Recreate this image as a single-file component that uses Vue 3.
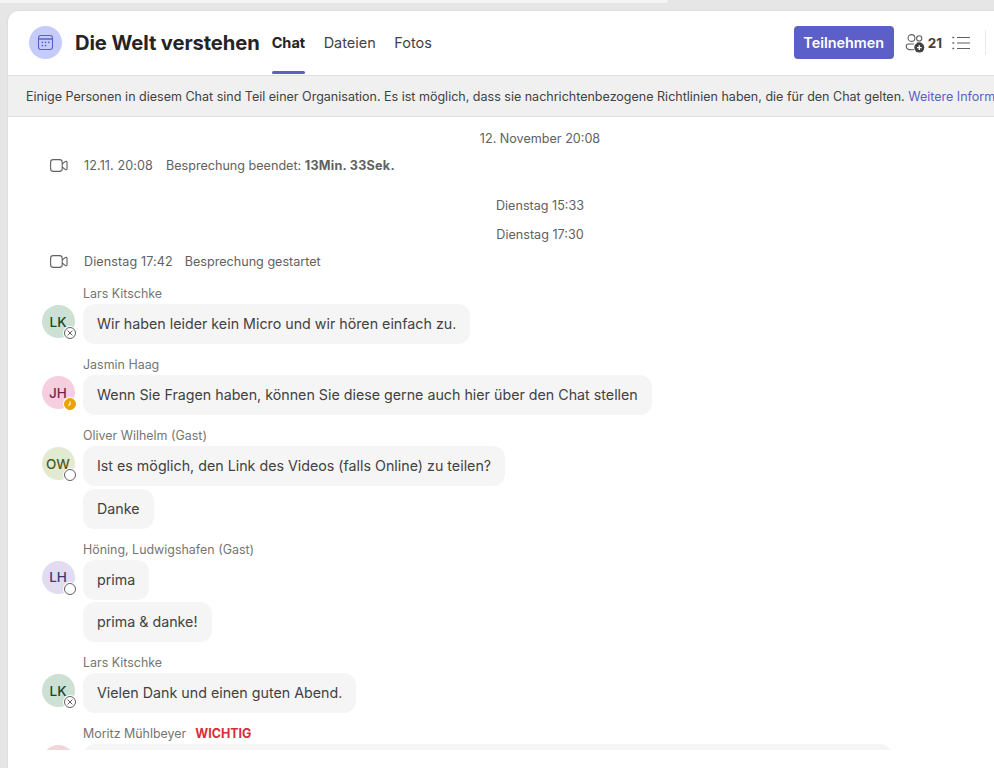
<template>
  <div class="page">
    <div class="top-strip"></div>
    <main class="panel">
      <header class="head">
        <div class="cal-badge">
          <svg width="17" height="17" viewBox="0 0 17 17" fill="none" stroke="#5b5fc7" stroke-width="1.1">
            <rect x="1.5" y="1.5" width="14" height="14" rx="2.4" />
            <path d="M1.5 5h14" stroke-width="1.6" />
            <g fill="#5b5fc7" stroke="none">
              <rect x="4.6" y="7.6" width="1.5" height="1.5" />
              <rect x="7.8" y="7.6" width="1.5" height="1.5" />
              <rect x="11" y="7.6" width="1.5" height="1.5" />
              <rect x="4.6" y="10.8" width="1.5" height="1.5" />
              <rect x="7.8" y="10.8" width="1.5" height="1.5" />
            </g>
          </svg>
        </div>
        <h1>Die Welt verstehen</h1>
        <nav class="tabs">
          <a v-for="t in tabs" :key="t" class="tab" :class="{ active: t === 'Chat' }">{{ t }}</a>
        </nav>
        <button class="join">Teilnehmen</button>
        <div class="people">
          <svg width="20" height="20" viewBox="0 0 20 20" fill="none" stroke="#616161" stroke-width="1.1">
            <circle cx="6.5" cy="5" r="3.4" />
            <circle cx="14.2" cy="5.4" r="2.6" />
            <path d="M9 11H3.4A2.2 2.2 0 0 0 1.2 13.2c0 2.2 2.3 3.6 5.3 3.6 .9 0 1.7-.1 2.5-.4" />
            <path d="M12 10h3.4" />
            <circle cx="14.3" cy="14.6" r="5" fill="#424242" stroke="none" />
            <path d="M14.3 12.3v4.6M12 14.6h4.6" stroke="#fff" stroke-width="1.3" />
          </svg>
          <span>21</span>
        </div>
        <svg class="list" width="18" height="14" viewBox="0 0 18 14" fill="none" stroke="#616161" stroke-width="1.2">
          <path d="M5 1.5h13M5 7h13M5 12.5h13" />
          <path d="M.4 1.5h1.8M.4 7h1.8M.4 12.5h1.8" stroke-width="1.7" />
        </svg>
        <div class="sep"></div>
      </header>

      <div class="banner">
        Einige Personen in diesem Chat sind Teil einer Organisation. Es ist möglich, dass sie nachrichtenbezogene Richtlinien haben, die für den Chat gelten. <a>Weitere Informationen</a>
      </div>

      <section class="feed">
        <div class="stamp first">12. November 20:08</div>
        <div class="event">
          <svg width="18" height="13" viewBox="0 0 18 13" fill="none" stroke="#616161" stroke-width="1.1">
            <rect x=".6" y=".6" width="11.6" height="11.8" rx="2.6" />
            <path d="M12.2 5l3.2-2.6c.6-.4 1.6-.2 1.6.8v6.6c0 1-1 1.2-1.6.8L12.2 8" />
          </svg>
          <span class="when">12.11. 20:08</span>
          <span>Besprechung beendet: <b>13Min. 33Sek.</b></span>
        </div>
        <div class="stamp second">Dienstag 15:33</div>
        <div class="stamp third">Dienstag 17:30</div>
        <div class="event started">
          <svg width="18" height="13" viewBox="0 0 18 13" fill="none" stroke="#616161" stroke-width="1.1">
            <rect x=".6" y=".6" width="11.6" height="11.8" rx="2.6" />
            <path d="M12.2 5l3.2-2.6c.6-.4 1.6-.2 1.6.8v6.6c0 1-1 1.2-1.6.8L12.2 8" />
          </svg>
          <span class="when">Dienstag 17:42</span>
          <span>Besprechung gestartet</span>
        </div>

        <div v-for="m in messages" :key="m.id" class="msg">
          <div class="avatar" :class="m.tone">
            {{ m.initials }}
            <span class="presence" :class="m.status">
              <svg v-if="m.status === 'off'" width="8" height="8" viewBox="0 0 8 8" fill="none" stroke="#616161" stroke-width="1">
                <path d="M1.6 1.6l4.8 4.8M6.4 1.6L1.6 6.4" />
              </svg>
              <svg v-if="m.status === 'away'" width="8" height="8" viewBox="0 0 8 8" fill="none" stroke="#fff" stroke-width="1.1">
                <path d="M4 1.4V4.4L2.2 5.6" />
              </svg>
            </span>
          </div>
          <div class="body">
            <div class="name">{{ m.name }}<span v-if="m.flag" class="flag">{{ m.flag }}</span></div>
            <div v-for="line in m.lines" :key="line" class="bubble" :class="{ wide: m.flag }">{{ line }}</div>
          </div>
        </div>
      </section>
    </main>
  </div>
</template>

<script setup>
const tabs = ['Chat', 'Dateien', 'Fotos']

const messages = [
  { id: 1, initials: 'LK', tone: 'green', status: 'off', name: 'Lars Kitschke', lines: ['Wir haben leider kein Micro und wir hören einfach zu.'] },
  { id: 2, initials: 'JH', tone: 'pink', status: 'away', name: 'Jasmin Haag', lines: ['Wenn Sie Fragen haben, können Sie diese gerne auch hier über den Chat stellen'] },
  { id: 3, initials: 'OW', tone: 'olive', status: 'none', name: 'Oliver Wilhelm (Gast)', lines: ['Ist es möglich, den Link des Videos (falls Online) zu teilen?', 'Danke'] },
  { id: 4, initials: 'LH', tone: 'lilac', status: 'none', name: 'Höning, Ludwigshafen (Gast)', lines: ['prima', 'prima & danke!'] },
  { id: 5, initials: 'LK', tone: 'green', status: 'off', name: 'Lars Kitschke', lines: ['Vielen Dank und einen guten Abend.'] },
  { id: 6, initials: '', tone: 'rose', status: 'hidden', name: 'Moritz Mühlbeyer', flag: 'WICHTIG', lines: [' '] }
]
</script>

<style>
html, body { margin: 0; background: #e6e6e6; }
</style>

<style scoped>
.page {
  width: 994px;
  height: 768px;
  overflow: hidden;
  background: #e6e6e6;
  font-family: Inter, "Liberation Sans", sans-serif;
  color: #424242;
}

.top-strip {
  width: 668px;
  height: 3px;
  margin-bottom: 8px;
  background: #f5f5f5;
  border-bottom-right-radius: 4px;
}

.panel {
  margin-left: 8px;
  height: 757px;
  background: #fff;
  border-top-left-radius: 10px;
  box-shadow: 0 0 2px rgba(0, 0, 0, 0.12);
  overflow: hidden;
  display: flex;
  flex-direction: column;
}

.head {
  height: 64px;
  flex: none;
  display: flex;
  align-items: center;
  padding: 0 0 1px 21px;
  box-sizing: border-box;
}

.cal-badge {
  width: 33px;
  height: 33px;
  border-radius: 50%;
  background: #c5cbfa;
  display: flex;
  align-items: center;
  justify-content: center;
  flex: none;
}

h1 {
  margin: 0 0 0 13px;
  font-size: 20.2px;
  font-weight: 700;
  letter-spacing: -0.1px;
  color: #242424;
  white-space: nowrap;
}

.tabs {
  display: flex;
  gap: 18.5px;
  margin-left: 12px;
  align-self: stretch;
}

.tab {
  font-size: 14.5px;
  color: #424242;
  line-height: 63px;
  position: relative;
}

.tab.active {
  font-weight: 700;
  color: #242424;
}

.tab.active::after {
  content: "";
  position: absolute;
  left: 0;
  right: 0;
  bottom: 0;
  height: 3px;
  border-radius: 2px;
  background: #5b5fc7;
}

.join {
  margin-left: auto;
  width: 100px;
  height: 33px;
  border: 0;
  border-radius: 4px;
  background: #5b5fc7;
  color: #fff;
  font: 600 14.4px Inter, "Liberation Sans", sans-serif;
}

.people {
  display: flex;
  align-items: center;
  gap: 3px;
  margin-left: 11px;
  font-size: 13.5px;
  font-weight: 700;
  color: #424242;
}

.list {
  margin-left: 10px;
}

.sep {
  width: 1px;
  height: 25px;
  background: #ebebeb;
  margin: 0 8px 0 15px;
}

.banner {
  height: 42px;
  flex: none;
  box-sizing: border-box;
  padding-left: 18px;
  background: #f0f0f0;
  border-top: 1px solid #e0e0e0;
  border-bottom: 1px solid #e0e0e0;
  font-size: 12.53px;
  line-height: 42px;
  white-space: nowrap;
  color: #424242;
}

.banner a {
  color: #5b5fc7;
}

.feed {
  height: 633px;
  flex: none;
  overflow: hidden;
  padding-left: 33.5px;
  font-size: 12.6px;
  color: #616161;
}

.stamp {
  width: 997px;
  text-align: center;
  line-height: 16px;
}

.first { margin-top: 14px; }
.second { margin-top: 25px; }
.third { margin-top: 13px; }

.event {
  display: flex;
  align-items: center;
  height: 16px;
  margin-top: 10px;
  padding-left: 8.5px;
  white-space: nowrap;
}

.event b {
  font-weight: 700;
  letter-spacing: 0.25px;
}

.event svg {
  margin-right: 16px;
  flex: none;
}

.when {
  margin-right: 13px;
  letter-spacing: 0.1px;
}

.started {
  margin-top: 10px;
  margin-bottom: 17px;
}

.started .when {
  margin-right: 12px;
}

.msg {
  display: flex;
  margin-top: 11px;
}

.avatar {
  width: 33px;
  height: 33px;
  margin-top: 19px;
  margin-right: 8.5px;
  border-radius: 50%;
  position: relative;
  flex: none;
  display: flex;
  align-items: center;
  justify-content: center;
  font-size: 13.5px;
  font-weight: 500;
}

.green { background: #cce0d4; color: #0e4a32; }
.pink { background: #f5cfdd; color: #7c2350; }
.olive { background: #e2ead2; color: #4a5c26; }
.lilac { background: #e2dcf0; color: #3e3578; }
.rose { background: #f3d6d8; color: #7c2350; }

.presence {
  position: absolute;
  right: -1px;
  bottom: -1px;
  box-sizing: border-box;
  width: 12px;
  height: 12px;
  border-radius: 50%;
  border: 1.2px solid #616161;
  background: #fff;
  box-shadow: 0 0 0 1px #fff;
  display: flex;
  align-items: center;
  justify-content: center;
}

.presence.away {
  background: #eaa300;
  border-color: #eaa300;
}

.presence.hidden {
  display: none;
}

.name {
  font-size: 12.45px;
  line-height: 16px;
  color: #757575;
  margin-bottom: 2px;
}

.flag {
  margin-left: 9px;
  font-weight: 700;
  color: #d92c3a;
}

.bubble {
  width: fit-content;
  box-sizing: border-box;
  height: 40px;
  line-height: 39px;
  padding: 0 14px;
  margin-bottom: 2.2px;
  border-radius: 12px;
  background: #f5f5f5;
  font-size: 14.25px;
  color: #424242;
  white-space: pre;
}

.bubble.wide {
  width: 809px;
}
</style>
